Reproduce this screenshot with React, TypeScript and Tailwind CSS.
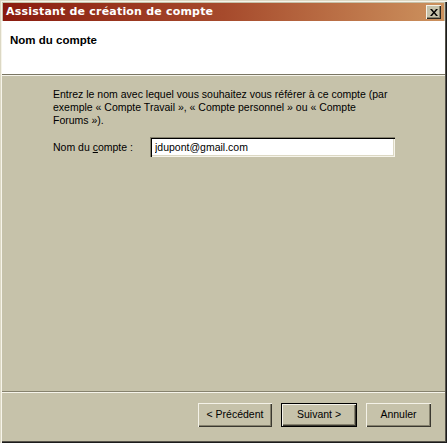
import { useState } from 'react'

function WinButton({ label, isDefault, width }: { label: string; isDefault?: boolean; width: string }) {
  return (
    <button
      type="button"
      className={`${width} h-[24px] bg-[#c6c2aa] text-[10.5px] text-black ${
        isDefault
          ? 'border border-black shadow-[inset_1px_1px_#f4f2e8,inset_-1px_-1px_#3a3830,inset_-2px_-2px_#86826e]'
          : 'shadow-[inset_1px_1px_#f4f2e8,inset_-1px_-1px_#3a3830,inset_-2px_-2px_#86826e]'
      }`}
    >
      {label}
    </button>
  )
}

export default function App() {
  const [name, setName] = useState('jdupont@gmail.com')

  return (
    <div
      className="flex h-[443px] w-[447px] flex-col bg-[#c6c2aa] px-[2px] pb-[3px] pt-[3px] shadow-[inset_1px_1px_#dcd8c4,inset_2px_2px_#f6f4ea,inset_-1px_-1px_#1c1c1c,inset_-2px_-2px_#55524a]"
      style={{ fontFamily: '"Liberation Sans", Arial, sans-serif' }}
    >
      {/* title bar */}
      <div className="mx-[1px] flex h-[18px] items-center justify-between bg-gradient-to-r from-[#8a1a0f] via-[#a64a2c] to-[#cc925e] pl-[3px] pr-[3px]">
        <span
          className="font-bold tracking-[0.2px] text-white"
          style={{ fontFamily: '"DejaVu Sans", Verdana, sans-serif', fontSize: '11px' }}
        >
          Assistant de création de compte
        </span>
        <button
          type="button"
          className="flex h-[14px] w-[15px] items-center justify-center bg-[#c6c2aa] shadow-[inset_1px_1px_#f4f2e8,inset_-1px_-1px_#2a2820,inset_-2px_-2px_#86826e]"
        >
          <svg width="8" height="7" viewBox="0 0 8 7">
            <path d="M0 0h2l2 2.5L6 0h2L5 3.5 8 7H6L4 4.5 2 7H0l3-3.5z" fill="#000" />
          </svg>
        </button>
      </div>

      {/* header */}
      <div className="h-[53px] bg-white pl-[8px] pt-[11px]">
        <h1 className="text-[11.5px] font-bold text-black">Nom du compte</h1>
      </div>
      <div className="h-[1px] bg-[#7a7664]" />
      <div className="h-[1px] bg-[#f6f4ea]" />

      {/* body */}
      <div className="flex flex-1 flex-col pl-[51px] pr-[30px] pt-[12px] text-[10.5px] leading-[13px] text-black">
        <p>
          Entrez le nom avec lequel vous souhaitez vous référer à ce compte (par
          <br />
          exemple « Compte Travail », « Compte personnel » ou « Compte
          <br />
          Forums »).
        </p>
        <div className="mt-[10px] flex items-center">
          <label htmlFor="account" className="w-[97px]">
            Nom du <span className="underline">c</span>ompte :
          </label>
          <input
            id="account"
            value={name}
            onChange={(e) => setName(e.target.value)}
            className="h-[20px] w-[245px] bg-white px-[5px] text-[10.5px] text-black outline-none shadow-[inset_1px_1px_#86826e,inset_2px_2px_#000,inset_-1px_-1px_#f6f4ea,inset_-2px_-2px_#dcd8c4]"
          />
        </div>
      </div>

      <div className="h-[1px] bg-[#86826e]" />
      <div className="h-[1px] bg-[#f6f4ea]" />

      {/* footer */}
      <div className="flex h-[47px] items-start justify-end gap-[9px] pr-[14px] pt-[10px]">
        <WinButton label="< Précédent" width="w-[74px]" />
        <WinButton label="Suivant >" width="w-[76px]" isDefault />
        <WinButton label="Annuler" width="w-[65px]" />
      </div>
    </div>
  )
}
